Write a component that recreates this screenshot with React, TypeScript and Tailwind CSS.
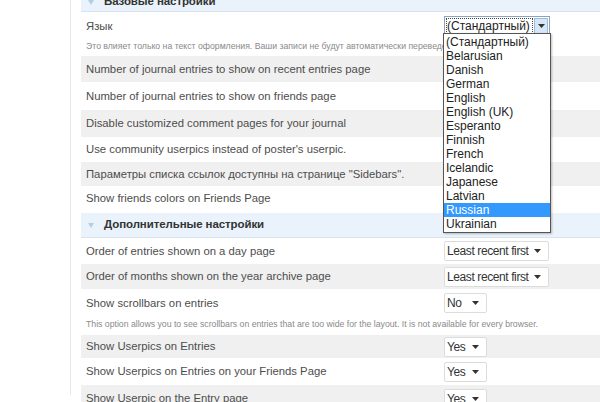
import React from 'react';

type Row = { label: string; bg: 'gray' | 'white'; h: number; control?: React.ReactNode; note?: string };

const LANGS = [
  '(Стандартный)', 'Belarusian', 'Danish', 'German', 'English', 'English (UK)', 'Esperanto',
  'Finnish', 'French', 'Icelandic', 'Japanese', 'Latvian', 'Russian', 'Ukrainian',
];

const Arrow = () => (
  <svg width="7" height="4" viewBox="0 0 7 4" className="shrink-0">
    <path d="M0 0h7L3.5 4z" fill="#333" />
  </svg>
);

const Select = ({ value, w }: { value: string; w: string }) => (
  <div className={`${w} h-[20px] flex items-center justify-between bg-white border border-[#dcdcdc] rounded-[2px] pl-[2px] pr-[7px] text-[12px] text-[#333]`}>
    <span className="tracking-[-0.4px] whitespace-nowrap">{value}</span>
    <Arrow />
  </div>
);

const LangSelect = () => (
  <div className="w-[106px] h-[20px] flex items-stretch bg-white border border-[#8aa4c0] p-[1px]">
    <div className="flex-1 flex items-center border border-dotted border-[#444] text-[12px] text-[#222] whitespace-nowrap overflow-hidden">
      (Стандартный)
    </div>
    <div className="w-[14px] ml-[1px] flex items-center justify-center bg-[#d6e6f6] border border-[#9cbbdc]">
      <Arrow />
    </div>
  </div>
);

const SectionHeader = ({ title, h }: { title: string; h: string }) => (
  <div className={`${h} flex items-center bg-[#eaf3fb] border-b border-[#d4e3ef]`}>
    <svg width="6" height="5" viewBox="0 0 6 5" className="ml-[7px] mr-[10px]">
      <path d="M0 0h6L3 5z" fill="#b3cfe6" />
    </svg>
    <span className="text-[11.5px] font-bold text-[#333] tracking-[-0.1px]">{title}</span>
  </div>
);

const rowsA: Row[] = [
  { label: 'Number of journal entries to show on recent entries page', bg: 'gray', h: 26 },
  { label: 'Number of journal entries to show on friends page', bg: 'white', h: 28 },
  { label: 'Disable customized comment pages for your journal', bg: 'gray', h: 27 },
  { label: "Use community userpics instead of poster's userpic.", bg: 'white', h: 25 },
  { label: 'Параметры списка ссылок доступны на странице "Sidebars".', bg: 'gray', h: 24 },
  { label: 'Show friends colors on Friends Page', bg: 'white', h: 24 },
];

const rowsB: Row[] = [
  { label: 'Order of entries shown on a day page', bg: 'white', h: 26, control: <Select value="Least recent first" w="w-[105px]" /> },
  { label: 'Order of months shown on the year archive page', bg: 'gray', h: 25, control: <Select value="Least recent first" w="w-[105px]" /> },
  {
    label: 'Show scrollbars on entries', bg: 'white', h: 46, control: <Select value="No" w="w-[43px]" />,
    note: 'This option allows you to see scrollbars on entries that are too wide for the layout. It is not available for every browser.',
  },
  { label: 'Show Userpics on Entries', bg: 'gray', h: 23, control: <Select value="Yes" w="w-[43px]" /> },
  { label: 'Show Userpics on Entries on your Friends Page', bg: 'white', h: 27, control: <Select value="Yes" w="w-[43px]" /> },
  { label: 'Show Userpic on the Entry page', bg: 'gray', h: 27, control: <Select value="Yes" w="w-[43px]" /> },
];

const SettingRow = ({ row }: { row: Row }) => (
  <div
    className={`${row.bg === 'gray' ? 'bg-[#f0f0f0]' : 'bg-white'} flex flex-col justify-center`}
    style={{ height: row.h }}
  >
    <div className="grid grid-cols-[363px_1fr] items-center">
      <span className="pl-[5px] text-[11.3px] text-[#4d4d4d] whitespace-nowrap">{row.label}</span>
      <div>{row.control}</div>
    </div>
    {row.note && (
      <div className="pl-[5px] mt-[5px] text-[8.7px] text-[#8a8a8a] whitespace-nowrap">{row.note}</div>
    )}
  </div>
);

export default function App() {
  return (
    <div className="relative w-[600px] h-[402px] overflow-hidden bg-white font-['Liberation_Sans',Arial,sans-serif]">
      <div className="ml-[70px] h-full border-l border-[#e8e8e8] pl-[10px]">
        <div className="-mt-[7px]">
          <SectionHeader title="Базовые настройки" h="h-[19px]" />
          <div className="h-[44px] bg-white">
            <div className="h-[28px] grid grid-cols-[363px_1fr] items-center">
              <span className="pl-[5px] text-[11.3px] text-[#4d4d4d]">Язык</span>
              <LangSelect />
            </div>
            <div className="pl-[5px] text-[8.7px] text-[#8a8a8a] whitespace-nowrap overflow-hidden">
              Это влияет только на текст оформления. Ваши записи не будут автоматически переведены.
            </div>
          </div>
          {rowsA.map((r) => (
            <SettingRow key={r.label} row={r} />
          ))}
          <div className="h-[3px] bg-white" />
          <SectionHeader title="Дополнительные настройки" h="h-[25px]" />
          {rowsB.map((r) => (
            <SettingRow key={r.label} row={r} />
          ))}
        </div>
      </div>

      {/* opened language list */}
      <div className="absolute left-[443px] top-[33px] w-[108px] bg-white border border-[#555] shadow-[1px_1px_2px_rgba(0,0,0,0.25)] py-[1px]">
        {LANGS.map((l) => (
          <div
            key={l}
            className={`h-[14px] leading-[14px] px-[2px] text-[12px] ${l === 'Russian' ? 'bg-[#3399ff] text-white' : 'text-[#222]'}`}
          >
            {l}
          </div>
        ))}
      </div>
    </div>
  );
}
